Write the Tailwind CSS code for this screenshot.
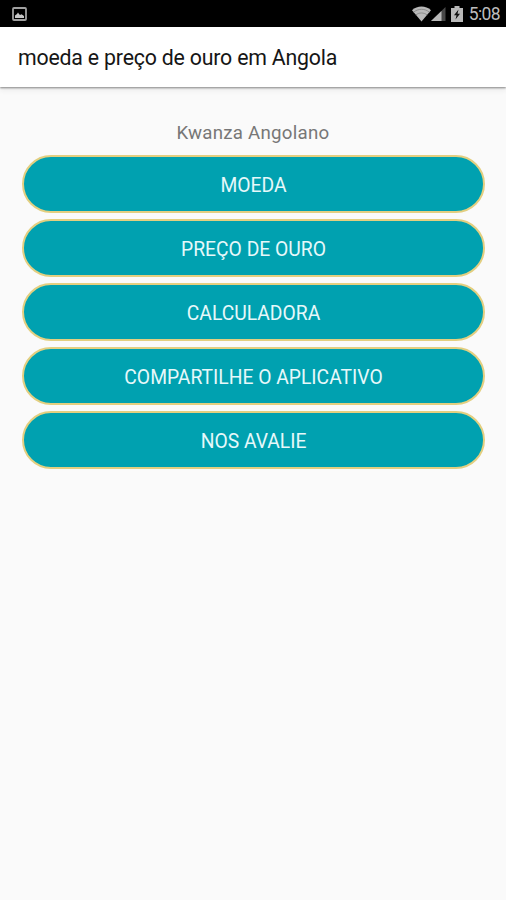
<!DOCTYPE html>
<html lang="pt">
<head>
<meta charset="utf-8">
<title>moeda e preço de ouro em Angola</title>
<script src="https://cdn.jsdelivr.net/npm/@tailwindcss/browser@4"></script>
</head>
<body class="flex h-[900px] w-[506px] flex-col overflow-hidden bg-[#fafafa] font-[Roboto,sans-serif]">
<div class="flex h-[27px] shrink-0 items-center bg-black pr-[6px] pl-[12px]">
  <svg class="h-[14px] w-[15px]" viewBox="0 0 15 14" fill="none"><rect x="1" y="1" width="13" height="12" rx="1" stroke="#a0a0a0" stroke-width="1.8"/><path d="M3 11V8.500l2-1.500L6 5.500 7 7l1 1 1.500-.8L12 9v2z" fill="#c8c8c8"/></svg>
  <svg class="ml-auto h-[16px] w-[19px]" viewBox="0 0 20 16" preserveAspectRatio="none"><path d="M0 4.200C5.500-.8 14.500-.8 20 4.200L10 15.500z" fill="#b9b9b9"/><path d="M1.500 6.300c5-4 12-4 17 0M4 9c3.500-2.700 8.500-2.700 12 0" fill="none" stroke="#777" stroke-width=".7"/></svg>
  <svg class="h-[16px] w-[15px]" viewBox="0 0 15 16"><path d="M14.500 1v14H0z" fill="#484848"/><path d="M10.500 5v10H0z" fill="#b9b9b9"/></svg>
  <svg class="ml-[5px] h-[16px] w-[12px]" viewBox="0 0 12 16"><path d="M0 2h3.500V0h5v2H12v14H0z" fill="#b9b9b9"/><path d="M7.500 3.500 3 9.200h2.500L4.500 13.500 9 7.800H6.500z" fill="#111"/></svg>
  <span class="ml-[6px] text-[17.500px] leading-[24px] tracking-[-0.600px] text-[#bdbdbd]">5:08</span>
</div>
<header class="z-10 flex h-[60px] shrink-0 items-center bg-white pl-[18px] shadow-[0_1px_2px_rgba(0,0,0,0.45),0_4px_5px_rgba(0,0,0,0.05)]">
  <h1 class="mt-[1px] text-[21.300px] leading-[28px] tracking-[-0.190px] whitespace-nowrap text-[#161616]">moeda e preço de ouro em Angola</h1>
</header>
<main class="flex flex-col gap-[7px] px-[22px] pt-[33px]">
  <p class="mb-[1.500px] h-[26.500px] text-center text-[18.700px] leading-[27px] tracking-[0.250px] text-[#777]">Kwanza Angolano</p>
  <div class="flex flex-col gap-[6px] text-[19.300px] text-[#e6f8fa]">
    <button class="h-[58px] w-[463px] rounded-full border-2 border-[#e3cf80] bg-[#00a1b0] pt-[4px]">MOEDA</button>
    <button class="h-[58px] w-[463px] rounded-full border-2 border-[#e3cf80] bg-[#00a1b0] pt-[4px]">PREÇO DE OURO</button>
    <button class="h-[58px] w-[463px] rounded-full border-2 border-[#e3cf80] bg-[#00a1b0] pt-[4px]">CALCULADORA</button>
    <button class="h-[58px] w-[463px] rounded-full border-2 border-[#e3cf80] bg-[#00a1b0] pt-[4px]">COMPARTILHE O APLICATIVO</button>
    <button class="h-[58px] w-[463px] rounded-full border-2 border-[#e3cf80] bg-[#00a1b0] pt-[4px]">NOS AVALIE</button>
  </div>
</main>
</body>
</html>
